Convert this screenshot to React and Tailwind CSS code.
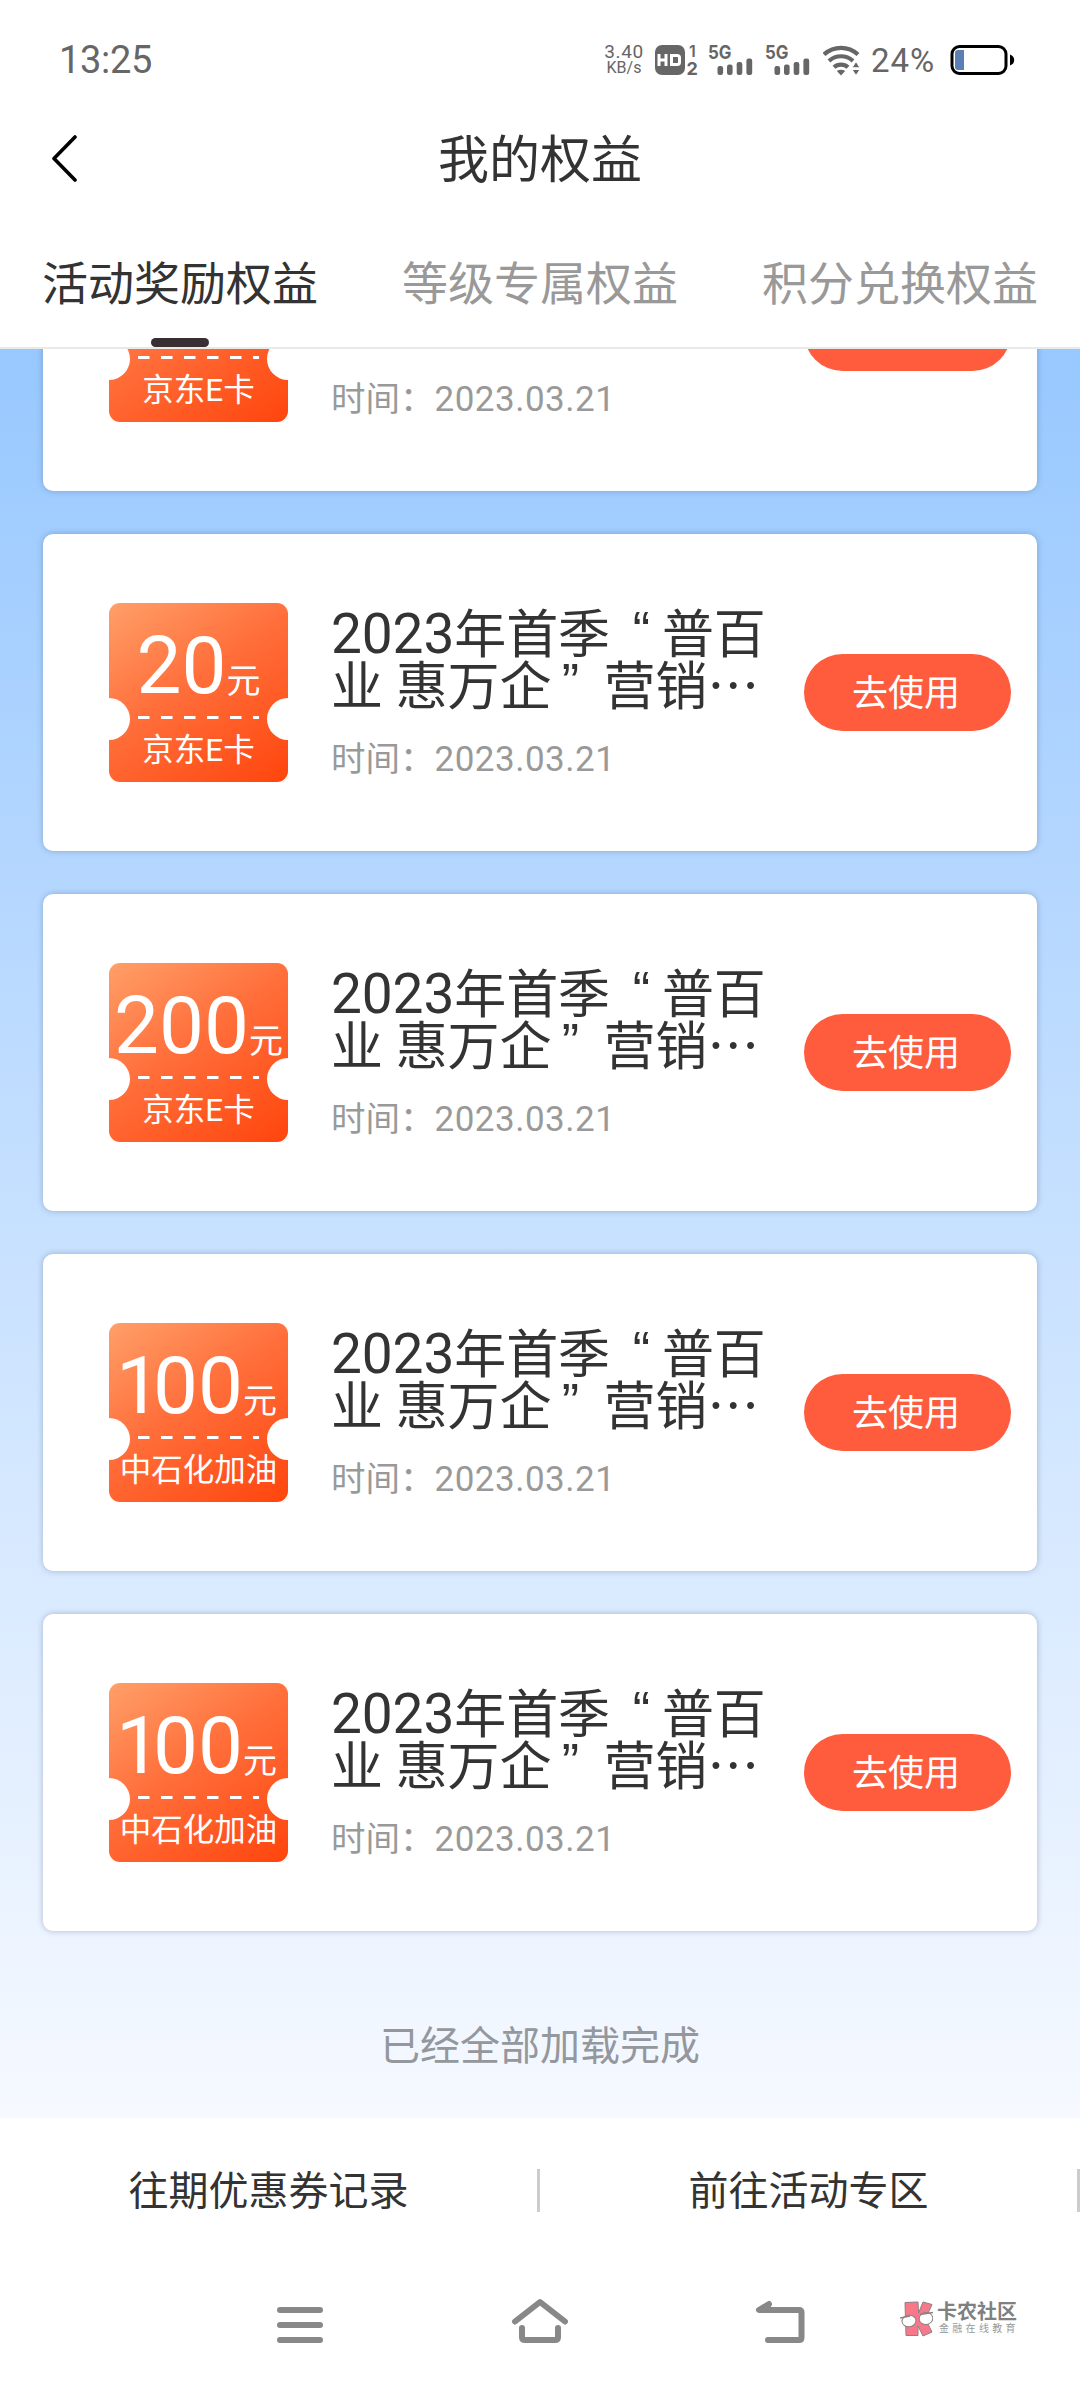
import React from "react";

const coupons = [
  { id: 1, amount: "20", label: "京东E卡", scrolledOff: true },
  { id: 2, amount: "20", label: "京东E卡" },
  { id: 3, amount: "200", label: "京东E卡" },
  { id: 4, amount: "100", label: "中石化加油" },
  { id: 5, amount: "100", label: "中石化加油" },
];

const tabs = ["活动奖励权益", "等级专属权益", "积分兑换权益"];

const links = ["往期优惠券记录", "前往活动专区"];

const Signal = () => (
  <svg className="w-[46px] h-8 shrink-0" viewBox="0 0 46 32" fill="#666">
    <text
      x="0"
      y="15"
      fontFamily="Inter, sans-serif"
      fontSize="19"
      fontWeight="700"
      textLength="23.5"
      lengthAdjust="spacingAndGlyphs"
    >
      5G
    </text>
    <rect x="9.5" y="22" width="5.6" height="9" rx="2.2" />
    <rect x="19" y="20.5" width="5.6" height="10.5" rx="2.2" />
    <rect x="28.7" y="18" width="5.6" height="13" rx="2.2" />
    <rect x="38.4" y="14.5" width="5.8" height="16.5" rx="2.2" />
  </svg>
);

const StatusBar = () => (
  <div className="h-[118px] pl-[59px] pr-[65px] flex items-center text-[#666]">
    <span className="text-[38px] leading-none tracking-[-0.3px] mt-0.5">
      13:25
    </span>
    <div className="ml-auto mt-0.5 flex items-center">
      <div className="w-[40px] h-8 flex flex-col items-center leading-none">
        <span className="text-[19px] leading-[16px] tracking-[0.6px]">3.40</span>
        <span className="text-[16px] leading-[16px]">KB/s</span>
      </div>
      <svg className="ml-[11px] w-[45px] h-8" viewBox="0 0 45 32" fill="#666">
        <rect x="0" y="1" width="30" height="30" rx="7" />
        <path
          d="M4 10v12M11 10v12M4 16h7"
          stroke="#fff"
          strokeWidth="3"
          fill="none"
        />
        <path
          d="M16.5 11.5h5.5q2.5 0 2.5 2v5q0 2-2.5 2H16.5z"
          stroke="#fff"
          strokeWidth="3"
          fill="none"
        />
        <text x="34" y="13" fontFamily="Inter, sans-serif" fontSize="16" fontWeight="600">
          1
        </text>
        <text x="31.5" y="31" fontFamily="Inter, sans-serif" fontSize="18" fontWeight="700">
          2
        </text>
      </svg>
      <div className="ml-2 flex gap-[11px]">
        <Signal />
        <Signal />
      </div>
      <svg className="ml-3 w-[37px] h-8" viewBox="0 0 37 32" fill="none">
        <g stroke="#666" strokeWidth="4.2">
          <path d="M1 10.5a25 25 0 0 1 34 0" />
          <path d="M6 17a17.5 17.5 0 0 1 24 0" />
          <path d="M11 23.3a10.5 10.5 0 0 1 14 0" />
        </g>
        <path d="M13.8 27q4.2-2.5 8.4 0L18 31.5z" fill="#666" />
        <path d="M29 23.8h8l-4-6.3zM29 25.5h8l-4 6z" fill="#666" stroke="#fff" strokeWidth="1" />
      </svg>
      <span className="ml-[11px] w-[68px] text-[33px] leading-none tracking-[1px] whitespace-nowrap">
        24%
      </span>
      <svg className="ml-[11px] w-[65px] h-8" viewBox="0 0 65 32" fill="none">
        <rect x="2" y="2.5" width="54" height="27" rx="7.5" stroke="#000" strokeWidth="3" />
        <path d="M8 6h6v20H8q-3 0-3-3V9q0-3 3-3z" fill="#5b7fb5" />
        <path d="M60 10.5q4.2 1.5 4.2 5.5T60 21.5z" fill="#000" />
      </svg>
    </div>
  </div>
);

const TitleBar = () => (
  <div className="h-[80px] px-[50px] grid grid-cols-[28px_1fr_28px] items-center">
    <svg className="w-7 h-12" viewBox="0 0 28 48" fill="none">
      <path
        d="M25 3L4 24.5L25 46"
        stroke="#000"
        strokeWidth="3.6"
        strokeLinecap="round"
        strokeLinejoin="round"
      />
    </svg>
    <h1 className="pt-1 text-center text-[51px] leading-none text-[#333]">我的权益</h1>
  </div>
);

const Tabs = () => (
  <div className="h-[151px] grid grid-cols-3 border-b-2 border-[#e9e9e9]">
    {tabs.map((tab, index) => (
      <div
        key={tab}
        className={`flex flex-col items-center justify-end ${
          index === 0 ? "text-[#333]" : "text-[#999]"
        }`}
      >
        <span className="text-[46px] leading-none mb-[31px]">{tab}</span>
        <div
          className={`w-[58px] h-[9px] rounded-full ${
            index === 0 ? "bg-[#372f31]" : "bg-transparent"
          }`}
        />
      </div>
    ))}
  </div>
);

const Amount = ({ value }) => (
  <span className="text-[80px] leading-[80px]">
    {/* Roboto gives the digit 1 too much room at this size */}
    {value.startsWith("1") ? (
      <>
        <span className="-ml-1 tracking-[-8px]">1</span>
        {value.slice(1)}
      </>
    ) : (
      value
    )}
  </span>
);

const Ticket = ({ amount, label, scrolledOff }) => (
  <div className="relative w-[179px] h-[179px] shrink-0 rounded-[11px] overflow-hidden bg-linear-[145deg,#ff9f69_0%,#ff6e3a_45%,#ff450d_100%] text-white flex flex-col items-center">
    <div className="mt-[23px] h-20 flex items-baseline justify-center whitespace-nowrap">
      {!scrolledOff && (
        <>
          <Amount value={amount} />
          <span className="text-[34px] leading-none">元</span>
        </>
      )}
    </div>
    <svg className="mt-[10px] w-[121px] h-[3px] shrink-0" viewBox="0 0 121 3">
      <path d="M0 1.5H121" stroke="#fff" strokeWidth="3" strokeDasharray="11.5 11.5" />
    </svg>
    <span className="mt-4 text-[31.5px] leading-none whitespace-nowrap">
      {label}
    </span>
    <div className="absolute -left-[21px] top-[95px] w-[42px] h-[42px] rounded-full bg-white" />
    <div className="absolute -right-[21px] top-[95px] w-[42px] h-[42px] rounded-full bg-white" />
  </div>
);

const Quote = ({ children, className }) => (
  <span
    className={`inline-block w-[52px] text-center align-[5px] leading-[40px] font-['Liberation_Sans'] ${className}`}
  >
    {children}
  </span>
);

const CouponTitle = () => (
  <>
    <div className="h-[49px]">
      <span className="text-[55px]">2023</span>
      年首季<Quote className="pl-[11px]">“</Quote>普百
    </div>
    <div className="h-[52px]">
      业 惠万企<Quote className="pr-[14px]">”</Quote>营销
      <span className="font-['Noto_Sans_CJK_SC']">…</span>
    </div>
  </>
);

const CouponCard = ({ amount, label, scrolledOff }) => (
  <div className="h-[317px] shrink-0 bg-white rounded-[10px] pl-[66px] pr-[26px] flex items-center shadow-[0_0_6px_rgba(60,80,110,0.35)]">
    <Ticket amount={amount} label={label} scrolledOff={scrolledOff} />
    <div className="ml-[43px] w-[473px] h-[175px] flex flex-col">
      <h2 className="h-[104px] pt-[3px] text-[52px] leading-[52px] tracking-[-0.1px] text-[#333] whitespace-nowrap">
        {!scrolledOff && <CouponTitle />}
      </h2>
      <div className="mt-[30px] text-[34.5px] leading-[40px] text-[#999] whitespace-nowrap">
        时间：<span className="text-[35px] tracking-[0.5px]">2023.03.21</span>
      </div>
    </div>
    <button className="w-[207px] h-[77px] pr-[3px] pt-0.5 shrink-0 rounded-full bg-[#ff5c3e] text-white text-[36px] leading-none">
      {!scrolledOff && "去使用"}
    </button>
  </div>
);

const BottomLinks = () => (
  <div className="h-[144px] grid grid-cols-2 items-center bg-white">
    {links.map((link) => (
      <div
        key={link}
        className="h-[43px] pt-[3px] flex items-center justify-center border-r-[3px] border-[#ccc] text-[40px] leading-none text-[#333]"
      >
        {link}
      </div>
    ))}
  </div>
);

const Watermark = () => (
  <div className="flex items-center gap-1">
    <svg className="w-[33px] h-9" viewBox="0 0 33 36" stroke="#8b8083" strokeWidth="1">
      <path
        d="M5 1.5L18 1l.5 11L23 1l9 2.5-6.5 14.5L32 31l-9 4-5-10v9.5H6z"
        fill="#f8788a"
      />
      <ellipse cx="9" cy="20" rx="7" ry="5.8" fill="#fff" transform="rotate(-8 9 20)" />
      <ellipse cx="26" cy="17.5" rx="6.8" ry="6" fill="#fff" transform="rotate(-8 26 17.5)" />
      <path d="M0 17l10-2M20 13.5l13-2" fill="none" strokeWidth="1.5" />
    </svg>
    <div className="flex flex-col text-[#808080] whitespace-nowrap">
      <span className="text-[20px] leading-[20px] font-bold">卡农社区</span>
      <span className="text-[10px] leading-[14px] tracking-[3.3px] pl-0.5 text-[#999]">
        金融在线教育
      </span>
    </div>
  </div>
);

const NavBar = () => (
  <div className="h-[126px] bg-white flex items-center pl-[270px]">
    <svg className="w-[60px] h-[60px]" viewBox="0 0 60 60">
      <path d="M10 15H50M10 30H50M10 45H50" stroke="#888" strokeWidth="6" strokeLinecap="round" />
    </svg>
    <svg
      className="ml-[180px] w-[60px] h-[60px]"
      viewBox="0 0 60 60"
      fill="none"
      stroke="#888"
      strokeWidth="6"
      strokeLinecap="round"
      strokeLinejoin="round"
    >
      <path d="M5 26.5L30 7L55 26.5" />
      <path d="M12 33v9q0 3 3 3H45q3 0 3-3v-9" />
    </svg>
    <svg
      className="ml-[180px] w-[60px] h-[60px]"
      viewBox="0 0 60 60"
      fill="none"
      stroke="#888"
      strokeWidth="6"
      strokeLinecap="round"
      strokeLinejoin="round"
    >
      <path d="M19 9L9 15H49q2.5 0 2.5 2.5V42.5Q51.5 45 49 45H18" />
      <path d="M19 9v6" strokeWidth="4" />
    </svg>
    <div className="ml-[90px] -mt-3">
      <Watermark />
    </div>
  </div>
);

const App = () => {
  return (
    <div className="w-[1080px] h-[2388px] bg-white flex flex-col overflow-hidden font-[Roboto,'Noto_Sans_CJK_SC',sans-serif]">
      <StatusBar />
      <TitleBar />
      <Tabs />
      {/* the list is scrolled to its end, so the first card is cut off */}
      <div className="h-[1769px] shrink-0 overflow-hidden px-[43px] flex flex-col justify-end gap-[43px] bg-linear-to-b from-[#98c8ff] to-[#f6f9ff]">
        {coupons.map((coupon) => (
          <CouponCard
            key={coupon.id}
            amount={coupon.amount}
            label={coupon.label}
            scrolledOff={coupon.scrolledOff}
          />
        ))}
        <div className="h-[144px] shrink-0 pt-[53px] text-center text-[40px] leading-[40px] text-[#94979c]">
          已经全部加载完成
        </div>
      </div>
      <BottomLinks />
      <NavBar />
    </div>
  );
};

export default App;
